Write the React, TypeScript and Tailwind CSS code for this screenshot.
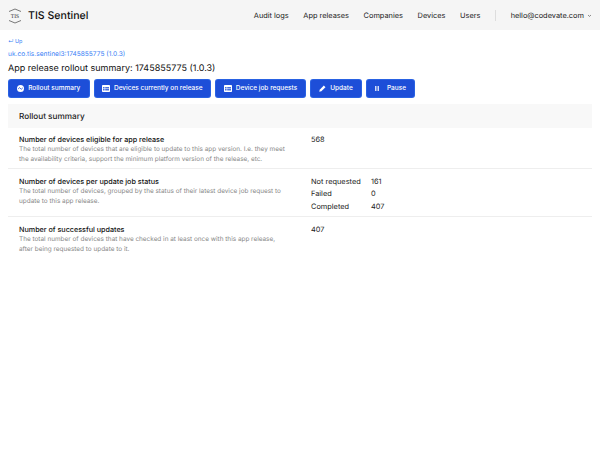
function Logo() {
  return (
    <svg width="14" height="16" viewBox="0 0 14 16" fill="none" stroke="#444" strokeWidth="0.7" className="shrink-0">
      <path d="M1 3.5 L7 1 L13 3.5" />
      <path d="M1 12.5 L7 15 L13 12.5" />
      <text x="7" y="10" textAnchor="middle" fontSize="5.6" fill="#333" stroke="none" fontFamily="Liberation Serif, serif">TIS</text>
    </svg>
  );
}

function Gauge() {
  return (
    <svg width="7" height="7" viewBox="0 0 8 8" className="shrink-0">
      <circle cx="4" cy="4" r="4" fill="white" />
      <path d="M1.3 4.5 L3 3 L4.8 4.9 L6.7 3.2" stroke="#1d4ed8" strokeWidth="0.9" fill="none" />
    </svg>
  );
}

function TableIcon() {
  return (
    <svg width="8" height="7" viewBox="0 0 8 7" className="shrink-0">
      <rect x="0" y="0" width="8" height="7" rx="0.8" fill="white" />
      <rect x="1" y="2.2" width="1.6" height="1.2" fill="#1d4ed8" />
      <rect x="3.2" y="2.2" width="3.8" height="1.2" fill="#1d4ed8" />
      <rect x="1" y="4.2" width="1.6" height="1.2" fill="#1d4ed8" />
      <rect x="3.2" y="4.2" width="3.8" height="1.2" fill="#1d4ed8" />
    </svg>
  );
}

function PencilIcon() {
  return (
    <svg width="7" height="7" viewBox="0 0 8 8" className="shrink-0">
      <path d="M0.3 7.7 L0.8 5.3 L5.5 0.6 L7.4 2.5 L2.7 7.2 Z" fill="white" />
    </svg>
  );
}

function PauseIcon() {
  return (
    <svg width="4" height="5" viewBox="0 0 4 5" className="shrink-0">
      <rect x="0.2" y="0" width="1.2" height="5" fill="white" />
      <rect x="2.6" y="0" width="1.2" height="5" fill="white" />
    </svg>
  );
}

function Btn({ icon, label, w, gap }: { icon: React.ReactNode; label: string; w: string; gap: string }) {
  return (
    <button className={`${w} ${gap} h-[19px] flex items-center justify-center rounded-[3px] border border-[#3b82f6]/40 bg-[#1d4ed8] text-white text-[6.5px] font-medium`}>
      {icon}
      <span>{label}</span>
    </button>
  );
}

function Row({ title, desc, children, border = true, h, pt }: { title: string; desc: string[]; children: React.ReactNode; border?: boolean; h: string; pt: string }) {
  return (
    <div className={`flex ${h} ${pt} ${border ? "border-b border-[#eeeeee]" : ""}`}>
      <div className="w-[292px] pl-[11px] shrink-0">
        <div className="text-[7.2px] leading-[10px] font-medium text-[#111]">{title}</div>
        {desc.map((d) => (
          <div key={d} className="text-[6.42px] leading-[9.5px] text-[#888] whitespace-nowrap">{d}</div>
        ))}
      </div>
      <div className="pl-[11px] text-[7.4px] leading-[10px] text-[#222]">{children}</div>
    </div>
  );
}

export default function App() {
  return (
    <div className="w-[600px] h-[473px] bg-white font-['Inter',sans-serif] overflow-hidden antialiased [text-rendering:geometricPrecision]">
      <header className="h-[30px] bg-[#f5f5f5] flex items-center pl-[8px] pr-[8px] pt-[1px]">
        <Logo />
        <span className="ml-[6px] text-[10.6px] font-medium text-[#111]">TIS Sentinel</span>
        <nav className="ml-auto flex items-center gap-[14.6px] text-[7.4px] text-[#222]">
          <span>Audit logs</span>
          <span>App releases</span>
          <span>Companies</span>
          <span>Devices</span>
          <span>Users</span>
          <span className="w-px h-[11px] bg-[#ddd]" />
          <span className="flex items-center gap-[3px]">hello@codevate.com
            <svg width="5" height="5" viewBox="0 0 5 5" fill="none" stroke="#444" strokeWidth="0.6"><path d="M1 2 L2.5 3.4 L4 2" /></svg>
          </span>
        </nav>
      </header>
      <main className="px-[8px] pt-[8px]">
        <div className="text-[5.5px] leading-[8px] text-[#3b82f6]">↵ Up</div>
        <div className="mt-[3px] text-[6.6px] leading-[10px] text-[#3b82f6]">uk.co.tis.sentinel3:1745855775 (1.0.3)</div>
        <h1 className="mt-[3px] text-[9px] leading-[13px] font-normal text-[#111]">App release rollout summary: 1745855775 (1.0.3)</h1>
        <div className="mt-[4px] flex gap-[4px]">
          <Btn w="w-[81.5px]" gap="gap-[4px]" icon={<Gauge />} label="Rollout summary" />
          <Btn w="w-[117.5px]" gap="gap-[4px]" icon={<TableIcon />} label="Devices currently on release" />
          <Btn w="w-[91px]" gap="gap-[4px]" icon={<TableIcon />} label="Device job requests" />
          <Btn w="w-[52px]" gap="gap-[4px]" icon={<PencilIcon />} label="Update" />
          <Btn w="w-[49px]" gap="gap-[8px]" icon={<PauseIcon />} label="Pause" />
        </div>
        <section className="mt-[6px] w-[584px]">
          <div className="h-[24px] bg-[#f8f8f8] flex items-center pl-[11px] text-[8.2px] font-medium text-[#222]">Rollout summary</div>
          <Row h="h-[41px]" pt="pt-[7px]" title="Number of devices eligible for app release" desc={["The total number of devices that are eligible to update to this app version. I.e. they meet", "the availability criteria, support the minimum platform version of the release, etc."]}>
            568
          </Row>
          <Row h="h-[48px]" pt="pt-[8px]" title="Number of devices per update job status" desc={["The total number of devices, grouped by the status of their latest device job request to", "update to this app release."]}>
            <div className="grid grid-cols-[60px_auto] gap-y-[2px] leading-[10.3px]">
              <span>Not requested</span><span>161</span>
              <span>Failed</span><span>0</span>
              <span>Completed</span><span>407</span>
            </div>
          </Row>
          <Row h="h-[46px]" pt="pt-[8px]" border={false} title="Number of successful updates" desc={["The total number of devices that have checked in at least once with this app release,", "after being requested to update to it."]}>
            407
          </Row>
        </section>
      </main>
    </div>
  );
}
